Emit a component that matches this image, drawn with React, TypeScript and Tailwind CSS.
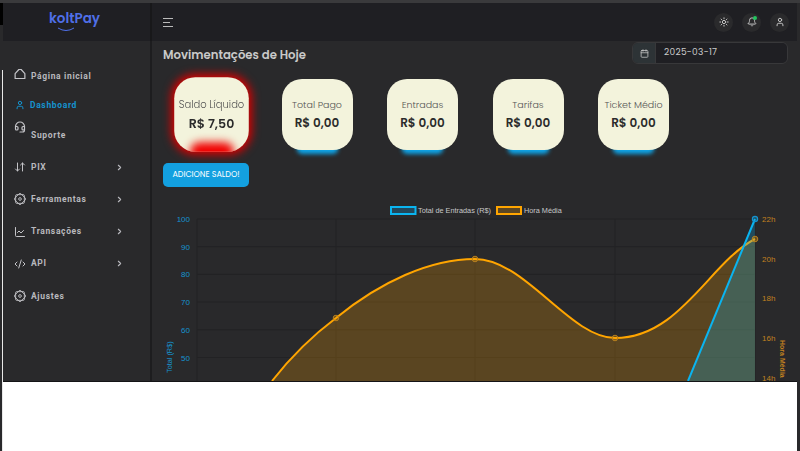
import { ArrowDownUp, Bell, Calendar, ChevronRight, CodeXml, Headset, LineChart, Sun, User } from 'lucide-react';
import React from 'react';

const HomeIcon = ({ className }: { className?: string }) => (
    <svg className={className} viewBox="0 0 16 16" fill="none" stroke="currentColor" strokeWidth="1.6" strokeLinejoin="round">
        <path d="M1.5 7.5 L6.5 2 H9.5 L14.5 7.5 V14 H1.5 Z" />
    </svg>
);

const RosetteIcon = ({ className }: { className?: string }) => (
    <svg className={className} viewBox="0 0 16 16" fill="none" stroke="currentColor" strokeWidth="1.2">
        <rect x="2.2" y="2.2" width="11.6" height="11.6" rx="1.4" />
        <rect x="2.2" y="2.2" width="11.6" height="11.6" rx="1.4" transform="rotate(45 8 8)" />
        <circle cx="8" cy="8" r="1.8" />
    </svg>
);

const navItems = [
    { label: 'PIX', icon: ArrowDownUp, arrow: true },
    { label: 'Ferramentas', icon: RosetteIcon, arrow: true },
    { label: 'Transações', icon: LineChart, arrow: true },
    { label: 'API', icon: CodeXml, arrow: true },
    { label: 'Ajustes', icon: RosetteIcon, arrow: false },
];

const cards = [
    { label: 'Total Pago', value: 'R$ 0,00' },
    { label: 'Entradas', value: 'R$ 0,00' },
    { label: 'Tarifas', value: 'R$ 0,00' },
    { label: 'Ticket Médio', value: 'R$ 0,00' },
];

const StatCard = ({ label, value, danger }: { label: string; value: string; danger?: boolean }) => (
    <div
        className={
            danger
                ? 'relative flex h-[71px] w-[71px] shrink-0 scale-105 flex-col items-center justify-center overflow-hidden rounded-[20px] bg-[#f3f3dc] shadow-[0_0_8px_3px_#d80000]'
                : 'relative flex h-[71px] w-[71px] shrink-0 flex-col items-center justify-center rounded-[20px] bg-[#f3f3dc] shadow-[0_19px_4px_-15px_#0ea5e9]'
        }
    >
        <span className="text-[9.5px] leading-4 font-light whitespace-nowrap text-[#555]">{label}</span>
        <span className="text-[12px] leading-5 font-semibold text-[#2b2b2b]">{value}</span>
        {danger && <div className="absolute -bottom-[9px] h-[18px] w-[42px] rounded-full bg-[#f00000] blur-[4px]" />}
    </div>
);

const ORANGE_AREA = 'M272 381 C 290 358 312 336 336 318 C 380 282 430 259 475 259 C 525 259 570 338 615 338 C 680 338 710 262 755 239';

const Chart = () => (
    <svg className="mt-[8px] -ml-[10px] h-[186px] w-[644px] shrink-0" viewBox="153 195 644 186" fontFamily="'Liberation Sans', sans-serif">
        <rect x="391" y="207" width="24.5" height="7" fill="#0ea5e9" fillOpacity="0.25" stroke="#0ab4f0" strokeWidth="2" />
        <text x="418" y="213" fontSize="7.3" fill="#c8c8c8">Total de Entradas (R$)</text>
        <rect x="497" y="207" width="24" height="7" fill="#f59e0b" fillOpacity="0.25" stroke="#ffa500" strokeWidth="2" />
        <text x="524" y="213" fontSize="7.3" fill="#c8c8c8">Hora Média</text>

        {[219, 246.7, 274.4, 302, 329.8, 357.5].map((y) => (
            <line key={y} x1="197" x2="755" y1={y} y2={y} stroke="#222224" />
        ))}
        {[197, 336, 475, 615, 755].map((x) => (
            <line key={x} x1={x} x2={x} y1="219" y2="381" stroke="#222224" />
        ))}

        {[
            ['100', 219],
            ['90', 246.7],
            ['80', 274.4],
            ['70', 302],
            ['60', 329.8],
            ['50', 357.5],
        ].map(([t, y]) => (
            <text key={t} x="190" y={Number(y) + 3} fontSize="8" textAnchor="end" fill="#1593cf">
                {t}
            </text>
        ))}
        {[
            ['22h', 219],
            ['20h', 259],
            ['18h', 298],
            ['16h', 338],
            ['14h', 377.5],
        ].map(([t, y]) => (
            <text key={t} x="762" y={Number(y) + 3} fontSize="8" fill="#c08020">
                {t}
            </text>
        ))}
        <text transform="translate(172 373) rotate(-90)" fontSize="7.3" fill="#1593cf">Total (R$)</text>
        <text transform="translate(780 340) rotate(90)" fontSize="7" fontWeight="bold" fill="#c08020">Hora Média</text>

        <path d={`${ORANGE_AREA} L755 381 Z`} fill="#ffa500" fillOpacity="0.23" />
        <path d={ORANGE_AREA} fill="none" stroke="#ffa500" strokeWidth="2" />
        <path d="M688 381 L755 219 L755 381 Z" fill="#0ab4f0" fillOpacity="0.25" />
        <path d="M688 381 L755 219" fill="none" stroke="#0ab4f0" strokeWidth="2" />
        {[[336, 318], [475, 259], [615, 338], [755, 239]].map(([x, y]) => (
            <circle key={x} cx={x} cy={y} r="2.8" fill="#ffa500" fillOpacity="0.3" stroke="#b8801f" strokeWidth="1" />
        ))}
        <circle cx="755" cy="219" r="2.6" fill="#0ab4f0" fillOpacity="0.3" stroke="#1593cf" strokeWidth="1.2" />
    </svg>
);

export default function App() {
    return (
        <div className="flex h-[451px] w-[800px] flex-col overflow-hidden bg-[#29292b] font-['Poppins','Inter',sans-serif] antialiased">
            <div className="h-[3px] shrink-0 bg-[#3a3a3c]" />
            <div className="flex min-h-0 flex-1">
                {/* left strip of the window behind */}
                <div className="flex w-[3px] shrink-0 flex-col">
                    <div className="h-[22px] bg-black" />
                    <div className="h-[45px]" />
                    <div className="flex-1 border-r border-r-[#e8e8e8]" />
                </div>
                <div className="flex min-w-0 flex-1 flex-col bg-white">
                    <div className="flex h-[378px] shrink-0 flex-col overflow-hidden bg-[#29292b]">
                        <div className="flex h-[38px] shrink-0 bg-[#1f1f23]">
                            <div className="flex w-[149px] items-center justify-center border-r-2 border-r-[#18181a] pr-[4px]">
                                <div className="relative mb-[3px] pb-[3px] text-[13.5px] leading-5 font-semibold text-[#4f6fe8]">
                                    koltPay
                                    <svg className="absolute bottom-0 left-[8px] h-[5px] w-[18px]" viewBox="0 0 18 5" fill="none" stroke="#4f6fe8" strokeWidth="1">
                                        <path d="M1 1 Q9 6 17 1" />
                                    </svg>
                                </div>
                            </div>
                            <div className="flex flex-1 items-center justify-between pr-[8px] pl-[11px]">
                                <svg className="h-[9px] w-[10px] text-[#bbb]" viewBox="0 0 10 9" stroke="currentColor" strokeWidth="1">
                                    <path d="M0 0.5 H10 M0 4.5 H7 M0 8.5 H10" />
                                </svg>
                                <div className="flex items-center gap-[9px]">
                                    {[Sun, Bell, User].map((Icon, i) => (
                                        <div className="relative flex size-[19px] items-center justify-center rounded-full bg-[#2a2a2c]" key={i}>
                                            <Icon className="size-[10px] text-[#c4c4c4]" strokeWidth={2.4} />
                                            {i === 1 && <div className="absolute top-[3px] right-[4px] size-[4px] rounded-full bg-[#22c55e]" />}
                                        </div>
                                    ))}
                                </div>
                            </div>
                        </div>
                        <div className="flex min-h-0 flex-1">
                            <nav className="flex w-[149px] shrink-0 flex-col border-r-2 border-r-[#1d1d1f] pt-[27px] pl-[11px] font-['Roboto',sans-serif] text-[8.5px] font-bold tracking-[0.65px] text-[#b9b9be]">
                                <div className="flex h-[16px] items-center">
                                    <HomeIcon className="mr-[5px] mb-[4px] size-[12px] text-[#c4c4c8]" />
                                    <span>Página inicial</span>
                                </div>
                                <div className="mt-[13px] flex h-[16px] items-center text-[#1593cf]">
                                    <User className="mr-[5px] ml-[1px] size-[10px]" strokeWidth={2.4} />
                                    <span>Dashboard</span>
                                </div>
                                <div className="mt-[14px] flex h-[16px] items-center">
                                    <Headset className="mr-[5px] mb-[16px] size-[12px] text-[#c4c4c8]" strokeWidth={2.4} />
                                    <span>Suporte</span>
                                </div>
                                <div className="mt-[16px] flex flex-col gap-[16.25px]">
                                    {navItems.map((item) => (
                                        <div className="flex h-[16px] items-center" key={item.label}>
                                            <item.icon className="mr-[5px] size-[12px] text-[#c4c4c8]" />
                                            <span className="w-[84px]">{item.label}</span>
                                            {item.arrow && <ChevronRight className="size-[9px]" strokeWidth={3} />}
                                        </div>
                                    ))}
                                </div>
                            </nav>
                            <main className="flex min-w-0 flex-1 flex-col pl-[11px]">
                                <div className="flex h-[27px] shrink-0 items-start justify-between pr-[9px]">
                                    <h1 className="mt-[4px] text-[11.7px] leading-5 font-semibold text-[#c9c9c9]">Movimentações de Hoje</h1>
                                    <div className="mt-[1px] flex h-[22px] w-[156px] items-center overflow-hidden rounded-[6px] border border-[#38383a] text-[9px] text-[#ccc]">
                                        <div className="flex h-full w-[23px] items-center justify-center border-r border-r-[#38383a] bg-[#2d3336]">
                                            <Calendar className="size-[9px]" />
                                        </div>
                                        <div className="flex h-full flex-1 items-center bg-[#1f1f23] pl-[8px] tracking-[0.3px]">2025-03-17</div>
                                    </div>
                                </div>
                                <div className="mt-[11px] flex gap-[34.5px] pl-[13px]">
                                    <StatCard danger label="Saldo Líquido" value="R$ 7,50" />
                                    {cards.map((c) => (
                                        <StatCard key={c.label} label={c.label} value={c.value} />
                                    ))}
                                </div>
                                <button className="mt-[13px] h-[24px] w-[86px] shrink-0 rounded-[5px] bg-[#13a0e0] text-[8px] font-normal text-white">
                                    ADICIONE SALDO!
                                </button>
                                <Chart />
                            </main>
                        </div>
                    </div>
                    <div className="h-[1px] shrink-0 bg-[#141416]" />
                </div>
                <div className="w-[3px] shrink-0" />
            </div>
        </div>
    );
}
